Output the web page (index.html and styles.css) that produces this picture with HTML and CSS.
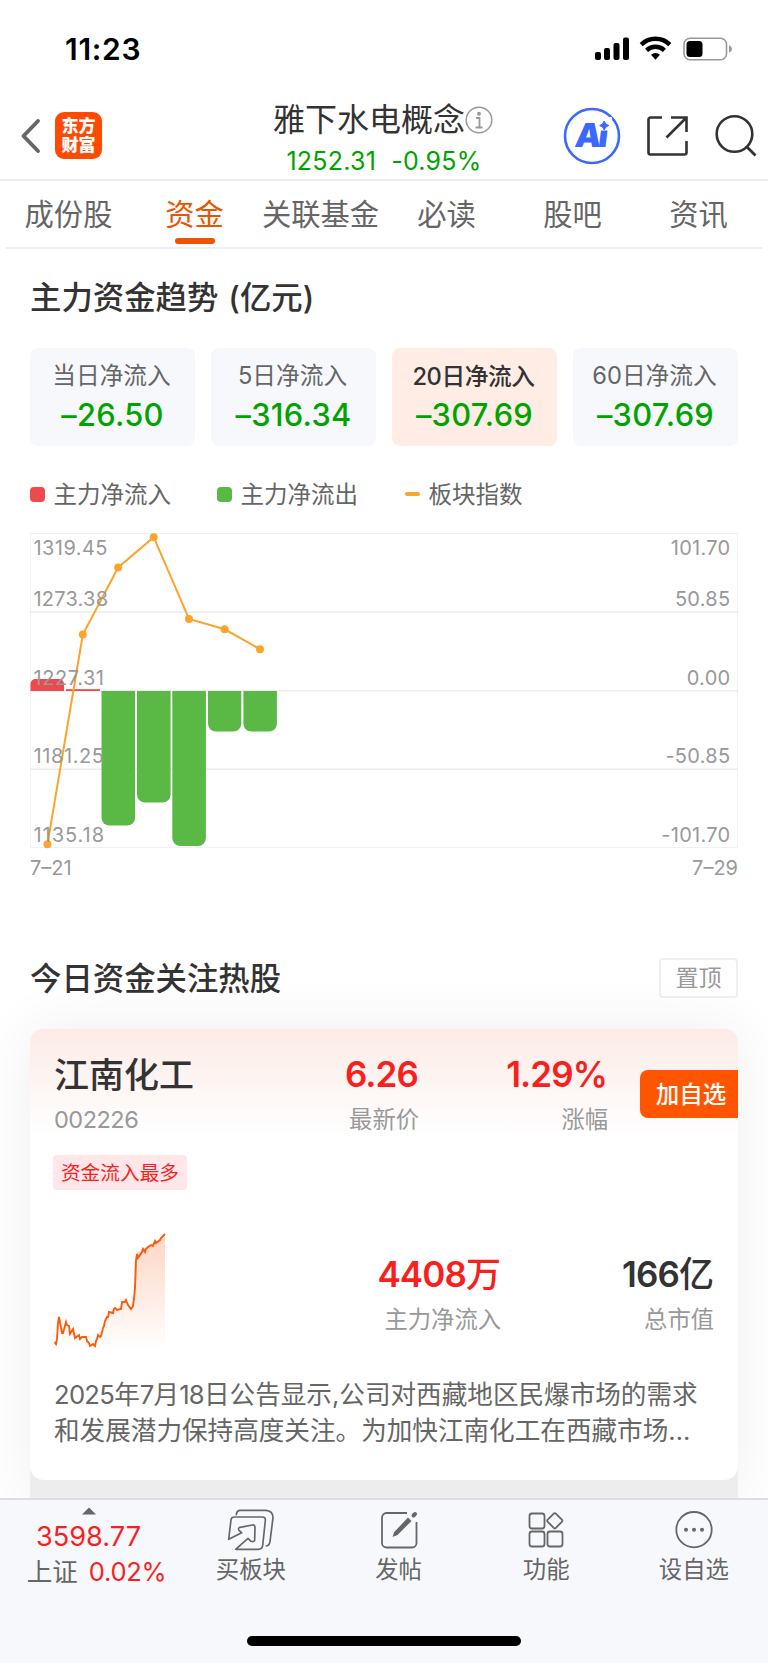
FILE: index.html
```html
<!DOCTYPE html>
<html lang="zh-CN">
<head>
    <meta charset="UTF-8">
    <meta name="viewport" content="width=device-width, initial-scale=1.0">
    <title>雅下水电概念</title>
    <link rel="stylesheet" href="styles.css">
</head>
<body>

    <div class="status-bar">
        <span class="clock">11:23</span>
        <svg class="status-icons" width="138" height="26" viewBox="0 0 138 26">
            <rect x="0" y="16" width="6" height="8" rx="2"/>
            <rect x="9" y="12" width="6" height="12" rx="2"/>
            <rect x="18.500" y="7" width="6" height="17" rx="2"/>
            <rect x="28" y="1.500" width="6" height="22.500" rx="2"/>
            <g fill="none" stroke="#000" stroke-width="4.400">
                <path d="M46.200 8.600a20.500 20.500 0 0 1 28.600 0"/>
                <path d="M51.600 14.300a13 13 0 0 1 17.800 0"/>
            </g>
            <path d="M56 18.800a6.500 6.500 0 0 1 9 0L60.500 23.800z"/>
            <rect x="89" y="2.200" width="42.500" height="21.500" rx="6" fill="none" stroke="#999" stroke-width="1.600"/>
            <rect x="91.500" y="5" width="16" height="16" rx="3.500"/>
            <path d="M134 9.200q3 1.200 3 3.800t-3 3.800z" fill="#999"/>
        </svg>
    </div>

    <header>
        <div class="header-left">
            <svg width="22" height="38" viewBox="0 0 22 38">
                <path d="M18 4L3.500 19 18 34" fill="none" stroke="#666" stroke-width="3.900" stroke-linecap="round" stroke-linejoin="round"/>
            </svg>
            <div class="logo">东方<br>财富</div>
        </div>
        <div class="header-title">
            <div class="name">雅下水电概念<svg width="28" height="28" viewBox="0 0 28 28">
                <circle cx="14" cy="14" r="12.800" fill="none" stroke="#999" stroke-width="1.500"/>
                <circle cx="14" cy="7.800" r="2" fill="#999"/>
                <path d="M11 12h3.500v9.500M10.600 21.500h7" fill="none" stroke="#999" stroke-width="1.800"/>
            </svg></div>
            <div class="quote"><span>1252.31</span><span>-0.95%</span></div>
        </div>
        <div class="header-right">
            <svg width="58" height="58" viewBox="0 0 58 58">
                <circle cx="29" cy="29" r="27" fill="#fff" stroke="#3b68fd" stroke-width="2.600"/>
                <text class="ai-text" transform="translate(11 39.500) skewX(-7)" textLength="33">Ai</text>
                <rect x="35" y="10" width="14" height="13.500" fill="#fff"/>
                <path d="M41.200 14q1 3.500 4.500 4.500-3.500 1-4.500 4.500-1-3.500-4.500-4.500 3.500-1 4.500-4.500z" fill="#3b68fd" stroke="#3b68fd"/>
            </svg>
            <svg class="share" width="42" height="42" viewBox="0 0 42 42">
                <path d="M16 2.500H4.500a2 2 0 0 0-2 2v33a2 2 0 0 0 2 2h34a2 2 0 0 0 2-2V26M25 2.500h15.500V17M40.500 2.500L20.500 22.500" fill="none" stroke="#333" stroke-width="2.600"/>
            </svg>
            <svg class="search" width="44" height="44" viewBox="0 0 44 44">
                <circle cx="20.500" cy="20" r="17.800" fill="none" stroke="#333" stroke-width="2.600"/>
                <path d="M32.500 32.500l9 9" stroke="#333" stroke-width="2.800"/>
            </svg>
        </div>
    </header>

    <nav class="tabs">
        <a>成份股</a>
        <a class="active">资金</a>
        <a>关联基金</a>
        <a>必读</a>
        <a>股吧</a>
        <a>资讯</a>
    </nav>

    <section class="trend">
        <h2>主力资金趋势<span class="unit">(亿元)</span></h2>

        <div class="periods">
            <div class="period">
                <div class="label">当日净流入</div>
                <div class="value">–26.50</div>
            </div>
            <div class="period">
                <div class="label">5日净流入</div>
                <div class="value">–316.34</div>
            </div>
            <div class="period selected">
                <div class="label">20日净流入</div>
                <div class="value">–307.69</div>
            </div>
            <div class="period">
                <div class="label">60日净流入</div>
                <div class="value">–307.69</div>
            </div>
        </div>

        <div class="legend">
            <div class="in"><i></i>主力净流入</div>
            <div class="out"><i></i>主力净流出</div>
            <div class="index"><i></i>板块指数</div>
        </div>

        <svg class="chart" width="708" height="350" viewBox="0 0 708 350">
            <!-- grid -->
            <rect class="frame" x="0.500" y="0.500" width="707" height="314"/>
            <path class="grid" d="M0 79H708M0 157.800H708M0 236.200H708"/>

            <!-- bars -->
            <g fill="#ec4a4c">
                <path d="M0.500 158v-7a5 5 0 0 1 5-5h23.500a5 5 0 0 1 5 5v7z"/>
                <rect x="36" y="156.200" width="34" height="1.800"/>
            </g>
            <g fill="#5ab944">
                <path d="M71.500 158h33.600v126.500a8 8 0 0 1-8 8h-17.600a8 8 0 0 1-8-8z"/>
                <path d="M107 158h33.600v103.500a8 8 0 0 1-8 8h-17.600a8 8 0 0 1-8-8z"/>
                <path d="M142.300 158h33.600v147a8 8 0 0 1-8 8h-17.600a8 8 0 0 1-8-8z"/>
                <path d="M178 158h33.300v32.500a8 8 0 0 1-8 8h-17.300a8 8 0 0 1-8-8z"/>
                <path d="M213.400 158h33.500v32.500a8 8 0 0 1-8 8h-17.500a8 8 0 0 1-8-8z"/>
            </g>

            <!-- index line -->
            <polyline points="17.500,311.200 52.800,101.500 88.200,34.500 123.700,4.200 159,86 194.600,96.300 230,116.200" fill="none" stroke="#fca42b" stroke-width="2"/>
            <g fill="#fca42b">
                <circle cx="17.500" cy="311.200" r="4"/>
                <circle cx="52.800" cy="101.500" r="4"/>
                <circle cx="88.200" cy="34.500" r="4"/>
                <circle cx="123.700" cy="4.200" r="4"/>
                <circle cx="159" cy="86" r="4"/>
                <circle cx="194.600" cy="96.300" r="4"/>
                <circle cx="230" cy="116.200" r="4"/>
            </g>

            <!-- axis labels -->
            <g class="axis">
                <text x="3.500" y="21.500" textLength="74">1319.45</text>
                <text x="3.500" y="72.700" textLength="74.500">1273.38</text>
                <text x="3.500" y="151.500" textLength="70.500">1227.31</text>
                <text x="3.500" y="230" textLength="70.500">1181.25</text>
                <text x="3.500" y="308.700" textLength="70.500">1135.18</text>
            </g>
            <g class="axis right">
                <text x="700.500" y="21.500">101.70</text>
                <text x="700.500" y="72.700">50.85</text>
                <text x="700.500" y="151.500">0.00</text>
                <text x="700.500" y="230">-50.85</text>
                <text x="700.500" y="308.700">-101.70</text>
            </g>
            <text class="date" x="0" y="342">7–21</text>
            <text class="date right" x="708" y="342">7–29</text>
        </svg>
    </section>

    <section class="hot">
        <div class="hot-title">
            <h2>今日资金关注热股</h2>
            <button class="pin">置顶</button>
        </div>

        <div class="stack">
            <div class="card">
                <div class="card-top">
                    <div class="stock">
                        <div class="stock-name">江南化工</div>
                        <div class="code">002226</div>
                    </div>
                    <div class="cell price">
                        <div class="num">6.26</div>
                        <div class="caption">最新价</div>
                    </div>
                    <div class="cell change">
                        <div class="num">1.29%</div>
                        <div class="caption">涨幅</div>
                    </div>
                    <button class="add">加自选</button>
                </div>

                <div class="tag">资金流入最多</div>

                <div class="card-mid">
                    <svg width="112" height="122" viewBox="0 0 112 122">
                        <defs>
                            <linearGradient id="fade" x1="0" y1="0" x2="0" y2="1">
                                <stop offset="0" stop-color="#fb6a2c" stop-opacity=".28"/>
                                <stop offset="1" stop-color="#fb6a2c" stop-opacity="0"/>
                            </linearGradient>
                        </defs>
                        <path d="M0 110L2 112 5 84 8 101 12 91 16 101 20 104 25 104 30 106 35 113 39 113 43 103 46 104 51 87 55 80 61 76 66 74 70 66 77 75 81 50 83 21 88 17 96 14 105 8 111 2V118H0z" fill="url(#fade)"/>
                        <polyline points="0.500,110 2,112 3,107 4,91 5,85 8,101 9,101 12,90 13,93 15,94 16,102 19,97 21,106 25,103 26,107 28,105 32,105 33,109 35,111 36,114 39,112 41,114 42,109 43,107 44,103 46,105 47,104 49,96 50,94 51,89 53,85 54,85 55,80 59,81 60,77 61,76 63,78 67,77 68,70 71,70 72,68 74,73 77,77 79,74 80,67 81,56 82,28 83,22 84,26 86,23 88,20 89,17 91,20 92,17 94,15 97,13 99,14 101,9 102,11 106,8 107,6 109,4 111,2" fill="none" stroke="#fb5b0c" stroke-width="1.900"/>
                    </svg>
                    <div class="cell inflow">
                        <div class="num">4408<b>万</b></div>
                        <div class="caption">主力净流入</div>
                    </div>
                    <div class="cell cap">
                        <div class="num">166<b>亿</b></div>
                        <div class="caption">总市值</div>
                    </div>
                </div>

                <p class="desc"><span>2025</span>年<span>7</span>月<span>18</span>日公告显示,公司对西藏地区民爆市场的需求<br>和发展潜力保持高度关注。为加快江南化工在西藏市场…</p>
            </div>
        </div>
    </section>

    <footer>
        <div class="toolbar">
            <div class="market">
                <svg width="14" height="8" viewBox="0 0 14 8"><path d="M0 7.500L7 0.500 14 7.500z" fill="#666"/></svg>
                <div class="points">3598.77</div>
                <div class="rate"><span>上证</span>0.02%</div>
            </div>
            <div class="item">
                <svg width="48" height="44" viewBox="0 0 144 132">
                    <g fill="none" stroke="#666" stroke-width="5" stroke-linejoin="round" stroke-linecap="round">
                        <path d="M28 20q1-13 12-13h76q22 1 22 22l-9 72q-2 12-11 13"/>
                        <path d="M5 94l7-58q1-9 10-9h84q10 0 9 10l-8 76q-2 11-13 11H26l37-33 9 9q8 3 11-3l1-40q-1-7-8-6L39 58q-7 3-3 9l8 7z"/>
                    </g>
                </svg>
                <span>买板块</span>
            </div>
            <div class="item">
                <svg width="48" height="44" viewBox="0 0 48 44">
                    <path d="M32 5H11.500a4.500 4.500 0 0 0-4.500 4.500v25.500a4.500 4.500 0 0 0 4.500 4.500h25.500a4.500 4.500 0 0 0 4.500-4.500V14" fill="none" stroke="#666" stroke-width="1.800"/>
                    <path d="M38.500 7.500L40 6" stroke="#666" stroke-width="4" stroke-linecap="round"/>
                    <path d="M33 9.500l3.500 3.500L22.500 27l-5 2 1.800-5z" fill="#666"/>
                </svg>
                <span>发帖</span>
            </div>
            <div class="item">
                <svg width="48" height="44" viewBox="0 0 48 44">
                    <g fill="none" stroke="#666" stroke-width="1.800">
                        <rect x="7.500" y="5.500" width="15" height="15" rx="2.500"/>
                        <rect x="7.500" y="23.500" width="15" height="15" rx="2.500"/>
                        <rect x="25.500" y="23.500" width="15" height="15" rx="2.500"/>
                        <rect x="27" y="7" width="11.500" height="11.500" rx="1.500" transform="rotate(45 32.800 12.800)"/>
                    </g>
                </svg>
                <span>功能</span>
            </div>
            <div class="item">
                <svg width="48" height="44" viewBox="0 0 48 44">
                    <circle cx="24" cy="21.700" r="17.700" fill="none" stroke="#666" stroke-width="1.800"/>
                    <g fill="#666">
                        <circle cx="16" cy="21.700" r="2"/>
                        <circle cx="24" cy="21.700" r="2"/>
                        <circle cx="32" cy="21.700" r="2"/>
                    </g>
                </svg>
                <span>设自选</span>
            </div>
        </div>
        <div class="home-indicator"></div>
    </footer>

</body>
</html>
```

FILE: styles.css
```css
* {
    box-sizing: border-box;
}
body {
    margin: 0;
    width: 768px;
    height: 1663px;
    overflow: hidden;
    display: flex;
    flex-direction: column;
    background-color: #fff;
    color: #333;
    font-family: Inter, "Noto Sans CJK SC", sans-serif;
}
svg {
    display: block;
    flex: none;
}
h2, p {
    margin: 0;
}
button {
    padding: 0;
    font-family: inherit;
}

/* status bar */
.status-bar {
    height: 88px;
    flex: none;
    display: flex;
    justify-content: space-between;
    padding: 31px 35px 0 65px;
    line-height: 36px;
}
.clock {
    color: #000;
    font-size: 30px;
    font-weight: 600;
    letter-spacing: .7px;
}
.status-icons {
    margin-top: 5px;
}

/* header */
header {
    height: 93px;
    flex: none;
    display: grid;
    grid-template-columns: 250px 1fr 250px;
    border-bottom: 2px solid #ededed;
}
.header-left {
    display: flex;
    align-items: flex-start;
    padding: 24px 0 0 20px;
    gap: 13px;
}
.header-left svg {
    margin-top: 5px;
}
.logo {
    width: 47px;
    height: 47px;
    padding-top: 5px;
    border-radius: 9px;
    background-color: #ff4a04;
    color: #fff;
    font-size: 17px;
    font-weight: 900;
    line-height: 19px;
    text-align: center;
}
.header-title {
    padding-top: 12px;
}
.header-title .name {
    display: flex;
    align-items: center;
    justify-content: center;
    margin-right: 2px;
    font-size: 32px;
    line-height: 40px;
    white-space: nowrap;
}
.quote {
    display: flex;
    justify-content: center;
    gap: 15px;
    padding-top: 5px;
    color: #00a400;
    font-size: 25px;
    letter-spacing: .25px;
    line-height: 32px;
}
.header-right {
    display: flex;
    align-items: flex-start;
    padding: 19px 0 0 45px;
}
.share {
    margin: 8px 0 0 25px;
}
.search {
    margin: 7px 0 0 26px;
}
.ai-text {
    fill: #3b68fd;
    font-size: 33px;
    font-weight: 900;
}

/* tabs */
.tabs {
    height: 68px;
    flex: none;
    margin: 0 6px;
    display: grid;
    grid-template-columns: repeat(6, 1fr);
    border-bottom: 2px solid #efefef;
    color: #666;
    font-size: 29.3px;
    line-height: 67px;
    text-align: center;
    white-space: nowrap;
}
.tabs a {
    padding-right: 1px;
}
.tabs .active {
    color: #ea5504;
    display: flex;
    flex-direction: column;
    align-items: center;
}
.tabs .active::after {
    content: "";
    width: 40px;
    height: 6px;
    margin-top: -10px;
    border-radius: 3px;
    background-color: #ea5504;
}

h2 {
    font-size: 31.4px;
    font-weight: 500;
    line-height: 40px;
    white-space: nowrap;
}

/* fund trend */
.trend {
    padding: 29px 30px 0;
}
.unit {
    margin-left: 10px;
}
.periods {
    display: grid;
    grid-template-columns: repeat(4, 1fr);
    gap: 16px;
    margin-top: 30px;
}
.period {
    height: 98px;
    padding-top: 12px;
    border-radius: 8px;
    background-color: #f7f8fb;
    text-align: center;
}
.period .label {
    padding-right: 2px;
    color: #666;
    font-size: 23.7px;
    line-height: 32px;
}
.period .value {
    margin-top: 3px;
    color: #00a400;
    font-size: 30.8px;
    font-weight: 500;
    letter-spacing: .3px;
    line-height: 40px;
}
.period.selected {
    background-color: #ffede5;
}
.period.selected .label {
    padding: 1px 2px 0 0;
    margin-bottom: -1px;
    color: #333;
    font-weight: 500;
    letter-spacing: -.4px;
}
.legend {
    display: flex;
    margin-top: 33px;
    color: #666;
    font-size: 23.5px;
    line-height: 32px;
}
.legend div {
    display: flex;
    align-items: center;
    gap: 8.5px;
}
.legend i {
    width: 15px;
    height: 15px;
    margin-top: -2px;
    border-radius: 4px;
}
.legend .in {
    width: 187px;
}
.legend .in i {
    background-color: #ec4a4c;
}
.legend .out {
    width: 188px;
}
.legend .out i {
    background-color: #5ab944;
}
.legend .index i {
    height: 4px;
    border-radius: 2px;
    background-color: #fca42b;
}
.chart {
    margin-top: 22px;
}
.frame {
    fill: none;
    stroke: #f0f0f0;
}
.grid {
    stroke: #ededed;
    stroke-width: 1.5;
}
.axis, .date {
    fill: #999;
    font-size: 20px;
}
.axis.right {
    letter-spacing: .3px;
}
.right {
    text-anchor: end;
}

/* hot stocks */
.hot {
    flex: 1;
    display: flex;
    flex-direction: column;
    padding: 75px 30px 0;
}
.hot-title {
    display: flex;
    justify-content: space-between;
}
.hot-title h2 {
    padding-top: 1px;
    margin-bottom: -1px;
}
.pin {
    width: 79px;
    height: 40px;
    border: 2px solid #efefef;
    border-radius: 4px;
    background-color: #fff;
    color: #999;
    font-size: 23px;
    line-height: 36px;
}
.stack {
    flex: 1;
    margin-top: 31px;
    border-radius: 14px 14px 0 0;
    background-color: #ededed;
    box-shadow: 0 0 60px rgba(0, 0, 0, .07);
}
.card {
    height: 451px;
    border-radius: 14px;
    background: linear-gradient(#fcebe6, #fff 106px) #fff;
}
.card-top {
    display: flex;
    height: 126px;
    padding: 23px 0 0 24px;
    white-space: nowrap;
}
.stock {
    width: 200px;
}
.stock-name {
    padding-top: 1px;
    margin-bottom: -1px;
    font-size: 35px;
    font-weight: 500;
    line-height: 44px;
}
.code {
    color: #999;
    font-size: 23.5px;
    letter-spacing: -.5px;
    line-height: 32px;
    padding-top: 8px;
}
.cell {
    text-align: right;
}
.num {
    color: #f91f1f;
    font-size: 35px;
    font-weight: 600;
    letter-spacing: -.9px;
    line-height: 44px;
}
.num b {
    font-weight: 500;
}
.caption {
    color: #999;
    font-size: 23.3px;
    line-height: 32px;
    padding-top: 8px;
}
.price {
    width: 165px;
}
.change {
    width: 189px;
}
.price .num, .change .num {
    padding-right: 1px;
}
.add {
    width: 98px;
    height: 48px;
    margin: 18px 0 0 32px;
    padding: 0 0 2px 4px;
    border: none;
    border-radius: 8px 0 0 8px;
    background-color: #ff5500;
    color: #fff;
    font-size: 23.5px;
    font-weight: 500;
}
.tag {
    width: 134px;
    height: 35px;
    margin-left: 23px;
    border-radius: 4px;
    background-color: #ffe7e9;
    color: #f91f1f;
    font-size: 19.7px;
    line-height: 36px;
    text-align: center;
}
.card-mid {
    display: flex;
    padding: 42px 24px 0 24px;
}
.card-mid .cell {
    padding-top: 20px;
}
.card-mid .num {
    padding-right: 1px;
}
.inflow {
    width: 335px;
}
.cap {
    width: 213px;
}
.cap .num {
    color: #333;
}
.desc {
    padding: 23px 0 0 24px;
    color: #666;
    font-size: 25.6px;
    line-height: 36px;
    white-space: nowrap;
}
.desc span {
    letter-spacing: -.7px;
}

/* bottom bar */
footer {
    height: 165px;
    flex: none;
    border-top: 2px solid #dcdee2;
    background-color: #f7f8fb;
}
.toolbar {
    display: grid;
    grid-template-columns: 177px repeat(4, 147.7px);
    color: #666;
}
.market {
    display: flex;
    flex-direction: column;
    align-items: center;
    padding-top: 7px;
    margin-left: 9px;
}
.market svg {
    margin-right: 9px;
}
.points {
    margin: 6px 9px 0 0;
    color: #f91f1f;
    font-size: 27.2px;
    line-height: 32px;
}
.rate {
    padding-top: 2px;
    margin-right: -7px;
    color: #f91f1f;
    font-size: 25.5px;
    letter-spacing: -.3px;
    line-height: 34px;
    white-space: nowrap;
}
.rate span {
    margin-right: 11px;
    color: #666;
    letter-spacing: 0;
}
.item {
    display: flex;
    flex-direction: column;
    align-items: center;
    padding-top: 8px;
    font-size: 23.4px;
    line-height: 32px;
}
.item span {
    margin-top: 2px;
}
.home-indicator {
    width: 274px;
    height: 10px;
    margin: 47px auto 0;
    border-radius: 5px;
    background-color: #000;
}
```
